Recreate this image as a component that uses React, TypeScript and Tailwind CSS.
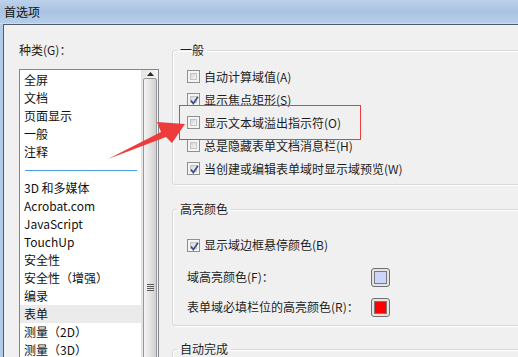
import React from "react";

const font = { fontFamily: '"Noto Sans CJK SC", "Noto Sans", sans-serif' };

function Check({ checked }: { checked?: boolean }) {
  return (
    <span className="relative flex h-[13px] w-[13px] shrink-0 items-center justify-center border border-[#8e8f8f] bg-[#f4f4f4] p-[2px]">
      <span className="block h-full w-full border border-[#c4c4c4] bg-gradient-to-br from-[#d6d6d6] to-[#f6f6f6]" />
      {checked && (
        <svg className="absolute left-[1px] top-[1px]" width="11" height="11" viewBox="0 0 11 11">
          <path d="M2 5.5 L4.3 8.5 L9 1.8" fill="none" stroke="#3b4f8c" strokeWidth="1.7" />
        </svg>
      )}
    </span>
  );
}

function CheckRow({ label, checked }: { label: string; checked?: boolean }) {
  return (
    <div className="flex h-[23px] items-center gap-[4px]">
      <Check checked={checked} />
      <span className="text-[12px] leading-[18px] text-[#1e1e1e]">{label}</span>
    </div>
  );
}

function Swatch({ color }: { color: string }) {
  return (
    <span className="flex h-[19px] w-[19px] items-center justify-center rounded-[3px] border border-[#707070] bg-[#e4e4e4] p-[2px]">
      <span className="block h-full w-full border border-[#7a7a7a]" style={{ background: color }} />
    </span>
  );
}

function Group({ title, children, className }: { title: string; children?: React.ReactNode; className?: string }) {
  return (
    <fieldset className={`w-[380px] rounded-[3px] border border-[#d5d9dc] pl-[4px] shadow-[inset_1px_1px_0_#ffffff,1px_1px_0_#ffffff] ${className ?? ""}`}>
      <legend className="px-[3px] text-[12px] leading-[18px] text-[#1e1e1e]">{title}</legend>
      {children}
    </fieldset>
  );
}

const items1 = ["全屏", "文档", "页面显示", "一般", "注释"];
const items2 = [
  "3D 和多媒体",
  "Acrobat.com",
  "JavaScript",
  "TouchUp",
  "安全性",
  "安全性（增强）",
  "编录",
  "表单",
  "测量（2D）",
  "测量（3D）",
];

export default function App() {
  return (
    <div className="relative h-[357px] w-[518px] overflow-hidden bg-[#f0f0f0]" style={font}>
      {/* title bar */}
      <div className="flex h-[23px] items-center bg-gradient-to-b from-[#bdd2ea] via-[#a9c3e1] to-[#b6cde8] pl-[4px] text-[12px] text-[#111]">
        首选项
      </div>
      <div className="h-px bg-[#c9dcf1]" />
      <div className="flex h-[333px] border-l-[3px] border-[#b3cbe7]">
        <div className="flex flex-1 border-l border-t border-[#4f5d6b] bg-[#f0f0f0]">
          {/* left column */}
          <div className="flex w-[155px] shrink-0 flex-col pl-[15px] pt-[16px]">
            <div className="text-[12px] leading-[18px] text-[#1e1e1e]">种类(G)：</div>
            <div className="mt-[10px] flex h-[300px] w-[140px] border border-[#82878f] bg-white">
              <div className="flex flex-1 flex-col pt-[1px]">
                {items1.map((t) => (
                  <div key={t} className="h-[18px] pl-[4px] text-[12px] leading-[18px] text-[#111]">
                    {t}
                  </div>
                ))}
                <div className="flex h-[18px] items-center pl-[5px] pr-[4px]">
                  <div className="h-px w-full bg-[#4a9fe8]" />
                </div>
                {items2.map((t) => (
                  <div
                    key={t}
                    className={`h-[18px] pl-[4px] text-[12px] leading-[18px] text-[#111] ${t === "表单" ? "bg-[#ebebeb]" : ""}`}
                  >
                    {t}
                  </div>
                ))}
              </div>
              {/* scrollbar */}
              <div className="flex w-[17px] flex-col border-l border-[#e3e3e3] bg-gradient-to-r from-[#e6e6e6] to-[#f4f4f4]">
                <div className="flex h-[18px] items-center justify-center">
                  <svg width="7" height="4" viewBox="0 0 7 4">
                    <path d="M0 4 L3.5 0 L7 4 Z" fill="#2a2a2a" />
                  </svg>
                </div>
                <div className="mx-[1px] flex h-[400px] flex-col items-center rounded-[2px] border border-[#979797] bg-gradient-to-r from-[#f3f3f3] via-[#e4e4e4] to-[#cfcfcf] pt-[205px]">
                  <div className="flex flex-col gap-[1px]">
                    <div className="h-px w-[7px] bg-[#5c5c5c]" />
                    <div className="h-px w-[7px] bg-[#5c5c5c]" />
                    <div className="h-px w-[7px] bg-[#5c5c5c]" />
                    <div className="h-px w-[7px] bg-[#5c5c5c]" />
                  </div>
                </div>
              </div>
            </div>
          </div>
          {/* right column */}
          <div className="flex flex-col pl-[13px] pt-[16px]">
            <Group title="一般">
              <div className="pb-[4px] pl-[10px] pt-[6px]">
                <CheckRow label="自动计算域值(A)" />
                <CheckRow label="显示焦点矩形(S)" checked />
                <CheckRow label="显示文本域溢出指示符(O)" />
                <CheckRow label="总是隐藏表单文档消息栏(H)" />
                <CheckRow label="当创建或编辑表单域时显示域预览(W)" checked />
              </div>
            </Group>
            <Group title="高亮颜色" className="mt-[15px]">
              <div className="pb-[6px] pl-[10px] pt-[15px]">
                <div className="flex h-[24px] items-center gap-[4px]">
                  <Check checked />
                  <span className="text-[12px] leading-[18px] text-[#1e1e1e]">显示域边框悬停颜色(B)</span>
                </div>
                <div className="mt-[8px] flex h-[24px] items-center">
                  <span className="w-[184px] text-[12px] leading-[18px] text-[#1e1e1e]">域高亮颜色(F)：</span>
                  <Swatch color="#cad6fc" />
                </div>
                <div className="mt-[6px] flex h-[24px] items-center">
                  <span className="w-[184px] text-[12px] leading-[18px] text-[#1e1e1e]">表单域必填栏位的高亮颜色(R)：</span>
                  <Swatch color="#ff0000" />
                </div>
              </div>
            </Group>
            <Group title="自动完成" className="mt-[14px] h-[60px]" />
          </div>
        </div>
      </div>

      {/* annotation overlay */}
      <div className="absolute left-[179px] top-[105px] h-[35px] w-[182px] border border-[#e8403f]" />
      <svg className="absolute left-0 top-0" width="518" height="357" viewBox="0 0 518 357">
        <polygon points="108,159 161,132 157,122 185,124 172,143 166,137" fill="#ee3b3b" />
      </svg>
    </div>
  );
}
